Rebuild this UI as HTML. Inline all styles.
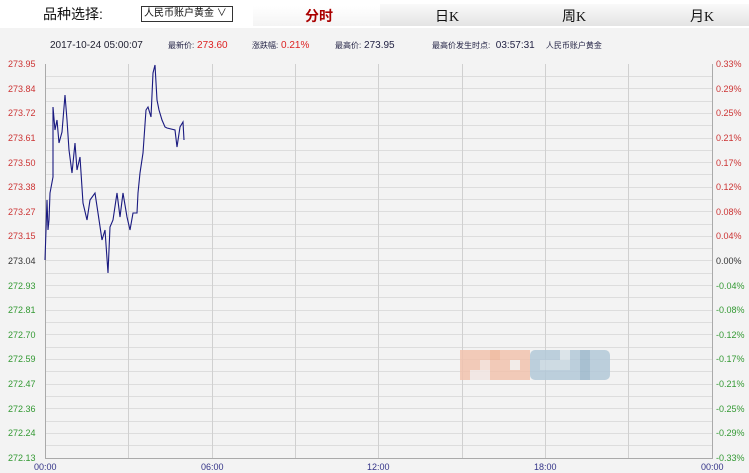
<!DOCTYPE html>
<html><head><meta charset="utf-8"><style>
body{margin:0;width:749px;height:473px;overflow:hidden;background:#f3f3f3;font-family:"Liberation Sans","Noto Sans CJK SC",sans-serif;position:relative}
.top{position:absolute;left:0;top:0;width:749px;height:28px;background:#fff}
.tabs{position:absolute;left:380px;top:4px;width:369px;height:22px;background:linear-gradient(#fafafa,#e4e4e4)}
.abs{position:absolute;white-space:nowrap}
.lab{position:absolute;font-size:9px;font-family:"Liberation Sans",sans-serif}
</style></head><body>
<div class="top"></div>
<div class="tabs"></div>
<div class="abs" style="left:253px;top:6px;width:127px;height:20px;background:linear-gradient(#fff,#f4f4f4)"></div>
<div class="abs" style="left:43px;top:4px;font-size:14px;color:#111">品种选择:</div>
<div class="abs" style="left:141px;top:6px;width:88px;height:14px;border:1px solid #333;background:#fff;font-size:10px;line-height:14px;color:#111;padding-left:2px;box-sizing:content-box">人民币账户黄金 <span style="font-size:10px">&#x2228;</span></div>
<div class="abs" style="left:305px;top:6px;font-size:14px;font-weight:bold;color:#a00">分时</div>
<div class="abs" style="left:435px;top:6px;font-size:14px;color:#111">日<span style="font-family:'Liberation Serif',serif">K</span></div>
<div class="abs" style="left:562px;top:6px;font-size:14px;color:#111">周<span style="font-family:'Liberation Serif',serif">K</span></div>
<div class="abs" style="left:690px;top:6px;font-size:14px;color:#111">月<span style="font-family:'Liberation Serif',serif">K</span></div>
<div class="abs" style="left:50px;top:40px;font-size:10px;color:#223">2017-10-24 05:00:07</div>
<div class="abs" style="left:168px;top:40px;font-size:10px;color:#224"><span style="font-size:8px">最新价:</span> <span style="color:#d22">273.60</span></div>
<div class="abs" style="left:252px;top:40px;font-size:10px;color:#224"><span style="font-size:8px">涨跌幅:</span> <span style="color:#d22">0.21%</span></div>
<div class="abs" style="left:335px;top:40px;font-size:10px;color:#224"><span style="font-size:8px">最高价:</span> 273.95</div>
<div class="abs" style="left:432px;top:40px;font-size:10px;color:#224"><span style="font-size:8px">最高价发生时点:</span> &nbsp;03:57:31 &nbsp;&nbsp; <span style="font-size:8px">人民币账户黄金</span></div>
<svg class="abs" style="left:0;top:0" width="749" height="473">
<g stroke="#ddd" stroke-width="1">
<path d="M45 76.5H712M45 88.5H712M45 101.5H712M45 113.5H712M45 125.5H712M45 138.5H712M45 150.5H712M45 162.5H712M45 174.5H712M45 187.5H712M45 199.5H712M45 211.5H712M45 224.5H712M45 236.5H712M45 248.5H712M45 260.5H712M45 273.5H712M45 285.5H712M45 297.5H712M45 310.5H712M45 322.5H712M45 334.5H712M45 347.5H712M45 359.5H712M45 371.5H712M45 384.5H712M45 396.5H712M45 408.5H712M45 421.5H712M45 433.5H712M45 445.5H712"/>
<path d="M128.5 64V458M212.5 64V458M295.5 64V458M378.5 64V458M462.5 64V458M545.5 64V458M628.5 64V458" stroke="#d0d0d0"/>
</g>
<path d="M45.5 64V458.5H712.5V64" fill="none" stroke="#aaa"/>
<g opacity=".85">
<rect x="460" y="350" width="70" height="30" fill="#f2c3ae"/>
<rect x="480" y="360" width="10" height="10" fill="#f3ddd4"/><rect x="490" y="350" width="10" height="10" fill="#f0b699"/><rect x="510" y="360" width="10" height="10" fill="#f2ebe8"/><rect x="470" y="370" width="20" height="10" fill="#f1e6e2"/>
<rect x="530" y="350" width="80" height="30" rx="5" fill="#b3c9d9"/>
<rect x="540" y="360" width="30" height="10" fill="#c8d7e1"/><rect x="560" y="350" width="10" height="10" fill="#d9e2e8"/><rect x="580" y="350" width="10" height="30" fill="#9bb8cc"/>
</g>
<polyline fill="none" stroke="#1a1a80" stroke-width="1.1" points="45,260 47,200 48,230 49,220 50,193 53,177 53,107 55,130 57,120 59,143 62,132 65,95 67,120 69,150 72,173 75,143 77,170 80,157 83,203 87,220 90,200 95,193 98,213 102,240 105,230 108,273 110,227 113,220 117,193 120,217 123,193 127,217 130,230 133,213 137,213 138,193 140,173 143,153 146,110 148,107 151,117 153,73 155,65 157,100 159,110 162,120 165,127 167,128 175,130 177,147 180,127 183,122 184,140"/>
</svg>
<div class="lab" style="left:8px;top:59px;color:#c33">273.95</div>
<div class="lab" style="left:8px;top:84px;color:#c33">273.84</div>
<div class="lab" style="left:8px;top:108px;color:#c33">273.72</div>
<div class="lab" style="left:8px;top:133px;color:#c33">273.61</div>
<div class="lab" style="left:8px;top:158px;color:#c33">273.50</div>
<div class="lab" style="left:8px;top:182px;color:#c33">273.38</div>
<div class="lab" style="left:8px;top:207px;color:#c33">273.27</div>
<div class="lab" style="left:8px;top:231px;color:#c33">273.15</div>
<div class="lab" style="left:8px;top:256px;color:#333">273.04</div>
<div class="lab" style="left:8px;top:281px;color:#393">272.93</div>
<div class="lab" style="left:8px;top:305px;color:#393">272.81</div>
<div class="lab" style="left:8px;top:330px;color:#393">272.70</div>
<div class="lab" style="left:8px;top:354px;color:#393">272.59</div>
<div class="lab" style="left:8px;top:379px;color:#393">272.47</div>
<div class="lab" style="left:8px;top:404px;color:#393">272.36</div>
<div class="lab" style="left:8px;top:428px;color:#393">272.24</div>
<div class="lab" style="left:8px;top:453px;color:#393">272.13</div>
<div class="lab" style="left:716px;top:59px;color:#c33">0.33%</div>
<div class="lab" style="left:716px;top:84px;color:#c33">0.29%</div>
<div class="lab" style="left:716px;top:108px;color:#c33">0.25%</div>
<div class="lab" style="left:716px;top:133px;color:#c33">0.21%</div>
<div class="lab" style="left:716px;top:158px;color:#c33">0.17%</div>
<div class="lab" style="left:716px;top:182px;color:#c33">0.12%</div>
<div class="lab" style="left:716px;top:207px;color:#c33">0.08%</div>
<div class="lab" style="left:716px;top:231px;color:#c33">0.04%</div>
<div class="lab" style="left:716px;top:256px;color:#333">0.00%</div>
<div class="lab" style="left:716px;top:281px;color:#393">-0.04%</div>
<div class="lab" style="left:716px;top:305px;color:#393">-0.08%</div>
<div class="lab" style="left:716px;top:330px;color:#393">-0.12%</div>
<div class="lab" style="left:716px;top:354px;color:#393">-0.17%</div>
<div class="lab" style="left:716px;top:379px;color:#393">-0.21%</div>
<div class="lab" style="left:716px;top:404px;color:#393">-0.25%</div>
<div class="lab" style="left:716px;top:428px;color:#393">-0.29%</div>
<div class="lab" style="left:716px;top:453px;color:#393">-0.33%</div>
<div class="lab" style="left:34px;top:462px;color:#338">00:00</div>
<div class="lab" style="left:201px;top:462px;color:#338">06:00</div>
<div class="lab" style="left:367px;top:462px;color:#338">12:00</div>
<div class="lab" style="left:534px;top:462px;color:#338">18:00</div>
<div class="lab" style="left:701px;top:462px;color:#338">00:00</div>
</body></html>
